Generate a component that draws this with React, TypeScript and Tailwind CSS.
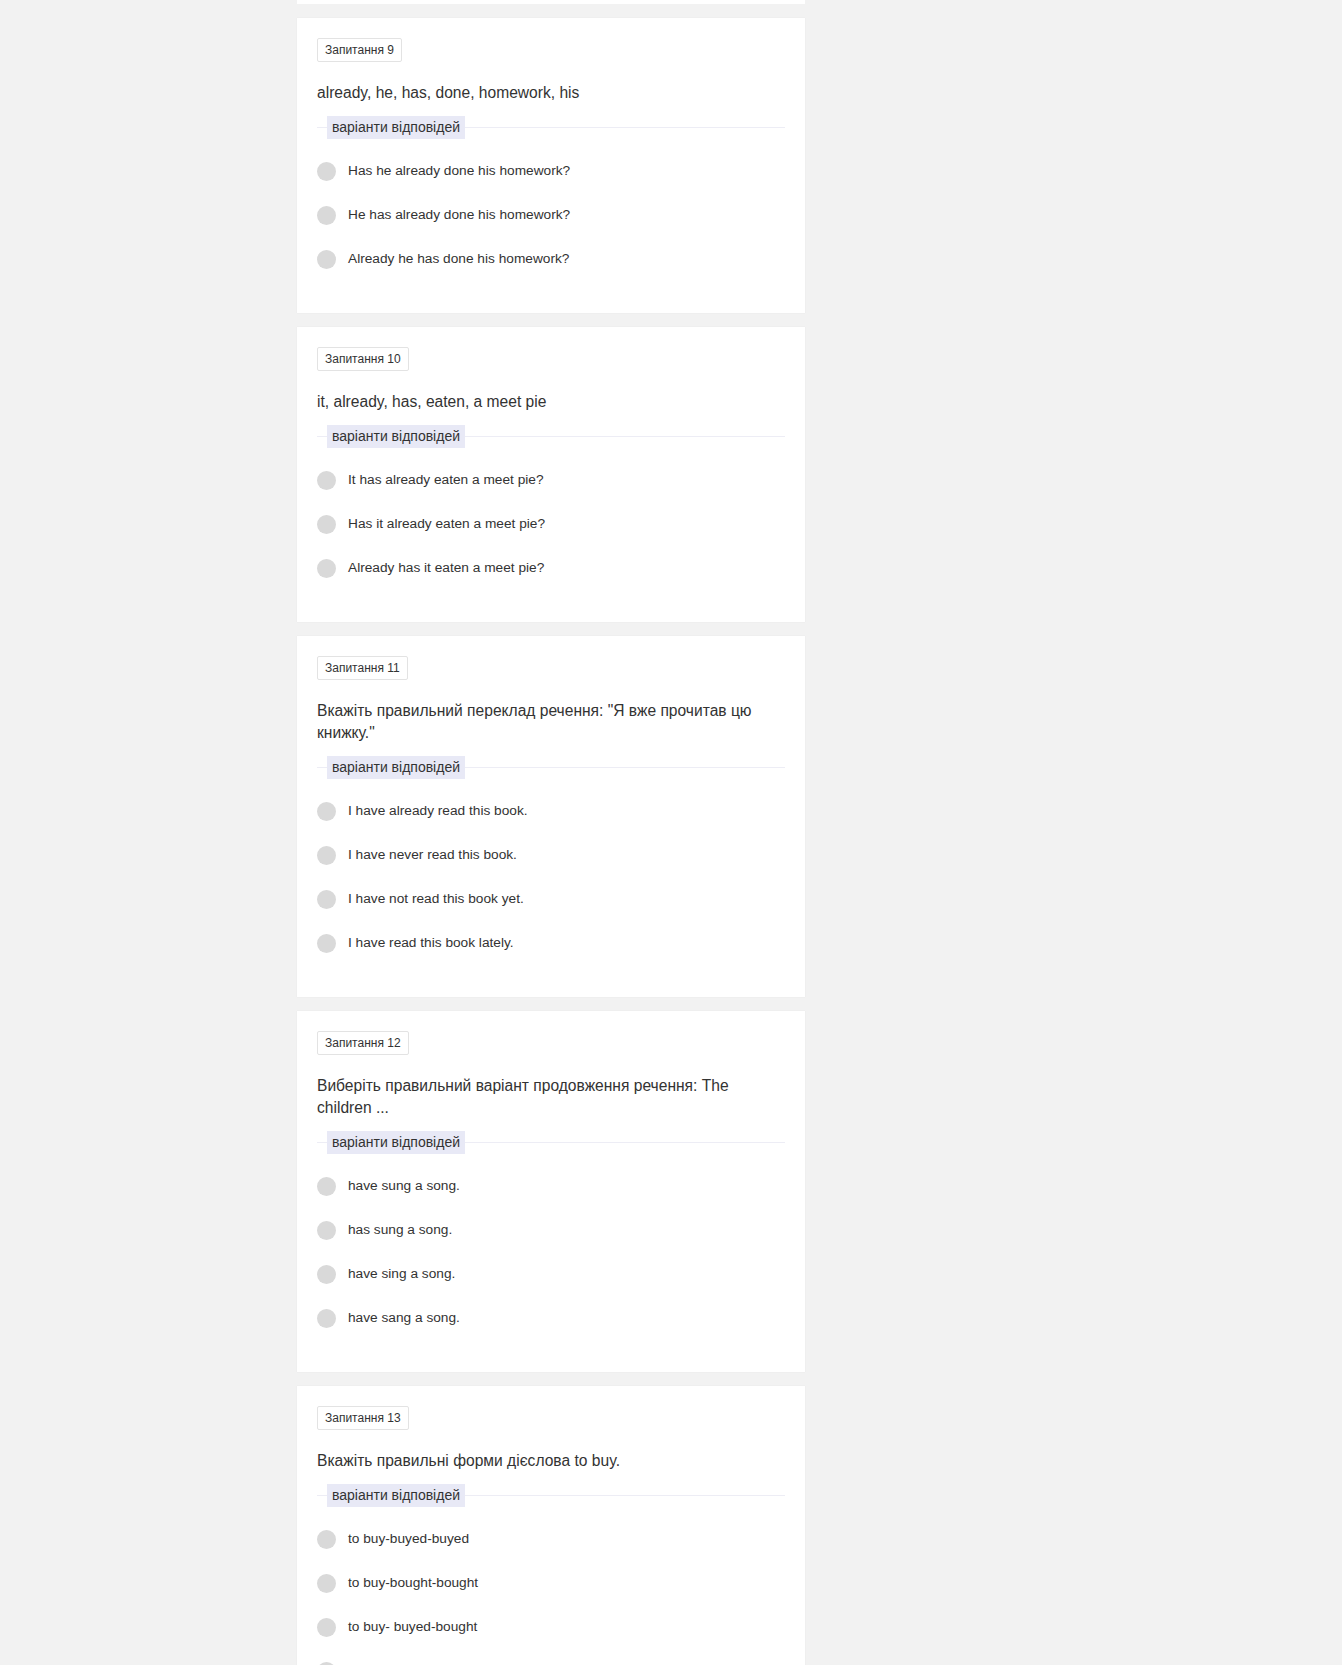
type Question = {
  num: number;
  text: string;
  options: string[];
};

const QUESTIONS: Question[] = [
  {
    num: 9,
    text: "already, he, has, done, homework, his",
    options: [
      "Has he already done his homework?",
      "He has already done his homework?",
      "Already he has done his homework?",
    ],
  },
  {
    num: 10,
    text: "it, already, has, eaten, a meet pie",
    options: [
      "It has already eaten a meet pie?",
      "Has it already eaten a meet pie?",
      "Already has it eaten a meet pie?",
    ],
  },
  {
    num: 11,
    text: 'Вкажіть правильний переклад речення: "Я вже прочитав цю книжку."',
    options: [
      "I have already read this book.",
      "I have never read this book.",
      "I have not read this book yet.",
      "I have read this book lately.",
    ],
  },
  {
    num: 12,
    text: "Виберіть правильний варіант продовження речення: The children ...",
    options: ["have sung a song.", "has sung a song.", "have sing a song.", "have sang a song."],
  },
  {
    num: 13,
    text: "Вкажіть правильні форми дієслова to buy.",
    options: [
      "to buy-buyed-buyed",
      "to buy-bought-bought",
      "to buy- buyed-bought",
      "to buy-bought-buyed",
    ],
  },
];

function QuestionCard({ q }: { q: Question }) {
  return (
    <section className="flex flex-col bg-white px-[20px] pt-[20px] pb-[44px] shadow-[0_0_1px_rgba(0,0,0,0.08)]">
      <div className="self-start rounded-[2px] border border-[#e3e3e3] px-[7px] text-[12px] leading-[22px] text-[#333]">
        Запитання {q.num}
      </div>

      <p className="mt-[20px] text-[15.6px] leading-[22px] text-[#333]">{q.text}</p>

      <div className="mt-[12px] flex items-center">
        <div className="h-px w-[10px] bg-[#ededf5]" />
        <span className="bg-[#e8e9f6] px-[5px] text-[14px] leading-[23px] text-[#333]">
          варіанти відповідей
        </span>
        <div className="h-px flex-1 bg-[#ededf5]" />
      </div>

      <ul className="mt-[22px] flex flex-col gap-[24px]">
        {q.options.map((opt) => (
          <li key={opt} className="flex h-[20px] items-center gap-[12px]">
            <span className="h-[19px] w-[19px] shrink-0 rounded-full bg-[#d9d9d9]" />
            <span className="text-[13.7px] text-[#333]">{opt}</span>
          </li>
        ))}
      </ul>
    </section>
  );
}

export default function App() {
  return (
    <div className="min-h-screen bg-[#f2f2f2] font-['Liberation_Sans',Arial,sans-serif]">
      <div className="ml-[297px] flex w-[508px] flex-col gap-[14px]">
        {/* tail of question 8, scrolled off the top */}
        <div className="h-[4px] bg-white" />
        {QUESTIONS.map((q) => (
          <QuestionCard key={q.num} q={q} />
        ))}
      </div>
    </div>
  );
}
